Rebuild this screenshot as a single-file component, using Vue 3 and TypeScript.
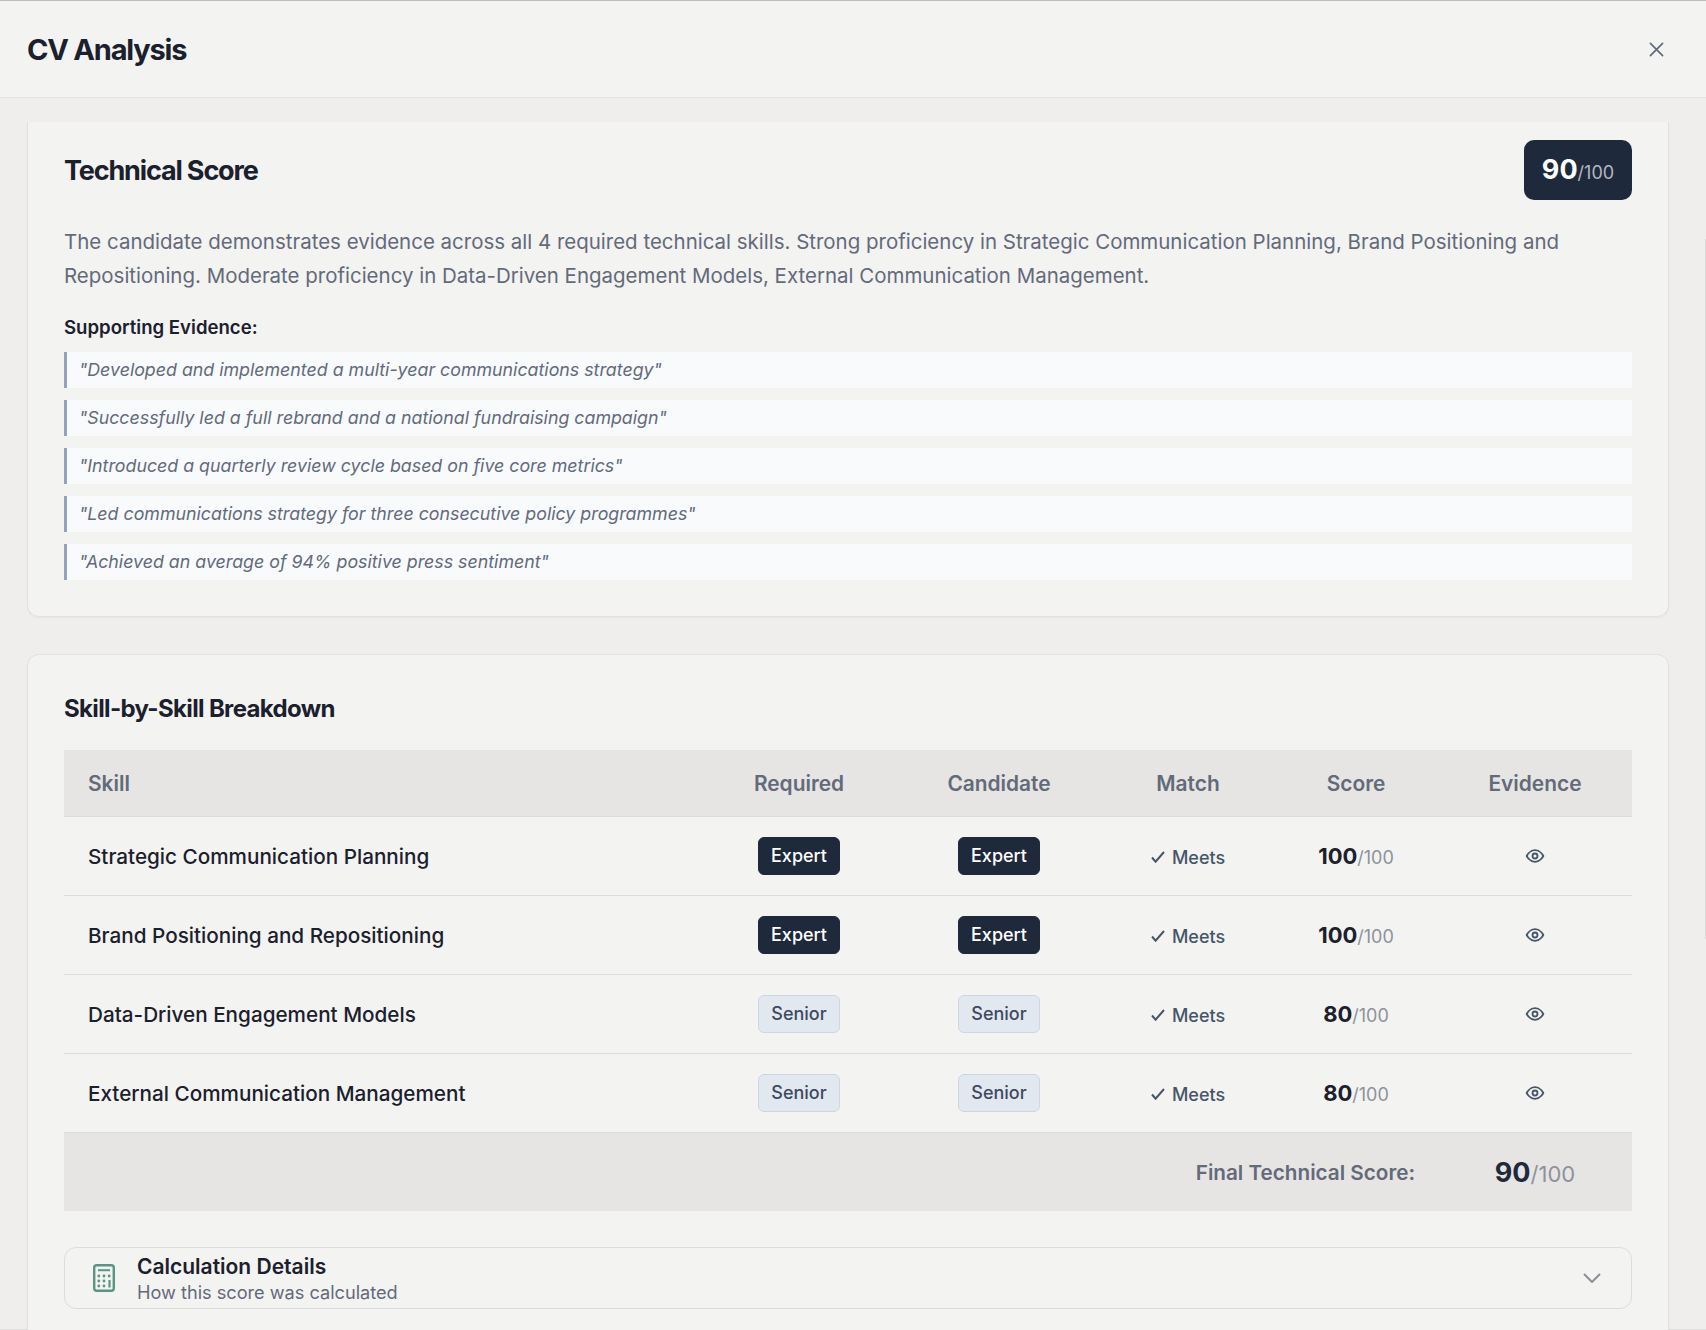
<script setup lang="ts">
interface SkillRow {
  name: string
  required: string
  candidate: string
  score: number
}

const evidence = [
  'Developed and implemented a multi-year communications strategy',
  'Successfully led a full rebrand and a national fundraising campaign',
  'Introduced a quarterly review cycle based on five core metrics',
  'Led communications strategy for three consecutive policy programmes',
  'Achieved an average of 94% positive press sentiment',
]

const skills: SkillRow[] = [
  { name: 'Strategic Communication Planning', required: 'Expert', candidate: 'Expert', score: 100 },
  { name: 'Brand Positioning and Repositioning', required: 'Expert', candidate: 'Expert', score: 100 },
  { name: 'Data-Driven Engagement Models', required: 'Senior', candidate: 'Senior', score: 80 },
  { name: 'External Communication Management', required: 'Senior', candidate: 'Senior', score: 80 },
]
</script>

<template>
  <div class="modal">
    <header class="modal-head">
      <h1>CV Analysis</h1>
      <svg class="close" viewBox="0 0 16 16" fill="none" stroke="currentColor" stroke-width="1.8" stroke-linecap="round">
        <path d="M1.5 1.5l13 13M14.5 1.5l-13 13" />
      </svg>
    </header>

    <div class="modal-body">
      <div class="scroller">
        <section class="card first">
          <div class="score-head">
            <h2>Technical Score</h2>
            <div class="score-badge"><b>90</b><span>/100</span></div>
          </div>
          <p class="summary">
            The candidate demonstrates evidence across all 4 required technical skills. Strong proficiency in Strategic Communication Planning, Brand Positioning and Repositioning. Moderate proficiency in Data-Driven Engagement Models, External Communication Management.
          </p>
          <h4>Supporting Evidence:</h4>
          <ul class="quotes">
            <li v-for="q in evidence" :key="q">"{{ q }}"</li>
          </ul>
        </section>

        <section class="card">
          <h3>Skill-by-Skill Breakdown</h3>
          <table class="skills">
            <colgroup>
              <col style="width: 638px" />
              <col style="width: 194px" />
              <col style="width: 206px" />
              <col style="width: 172px" />
              <col style="width: 164px" />
              <col style="width: 194px" />
            </colgroup>
            <thead>
              <tr>
                <th class="left">Skill</th>
                <th>Required</th>
                <th>Candidate</th>
                <th>Match</th>
                <th>Score</th>
                <th>Evidence</th>
              </tr>
            </thead>
            <tbody>
              <tr v-for="s in skills" :key="s.name">
                <td class="left name">{{ s.name }}</td>
                <td><span class="level" :class="s.required.toLowerCase()">{{ s.required }}</span></td>
                <td><span class="level" :class="s.candidate.toLowerCase()">{{ s.candidate }}</span></td>
                <td>
                  <span class="meets">
                    <svg viewBox="0 0 14 12" fill="none" stroke="currentColor" stroke-width="2">
                      <path d="M1 6.5l3.6 4.2L13 1" />
                    </svg>
                    Meets
                  </span>
                </td>
                <td class="score"><b>{{ s.score }}</b><span>/100</span></td>
                <td>
                  <svg class="eye" viewBox="0 0 24 24" fill="none" stroke="currentColor" stroke-width="2.2" stroke-linecap="round" stroke-linejoin="round">
                    <path d="M2 12s3.6-7 10-7 10 7 10 7-3.6 7-10 7-10-7-10-7z" />
                    <circle cx="12" cy="12" r="3" />
                  </svg>
                </td>
              </tr>
            </tbody>
            <tfoot>
              <tr>
                <td colspan="5" class="final-label">Final Technical Score:</td>
                <td class="final-score"><b>90</b><span>/100</span></td>
              </tr>
            </tfoot>
          </table>

          <div class="calc">
            <svg class="calc-icon" viewBox="0 0 22 28" fill="none" stroke="currentColor" stroke-width="2.4">
              <rect x="1.2" y="1.2" width="19.6" height="25.6" rx="2.5" />
              <path d="M5 6.2h12" stroke-width="2" />
              <path d="M16.5 16v7.5" stroke-width="2.2" />
              <g fill="currentColor" stroke="none">
                <circle cx="5.8" cy="12" r="1.4" /><circle cx="11" cy="12" r="1.4" /><circle cx="16.2" cy="12" r="1.4" />
                <circle cx="5.8" cy="17" r="1.4" /><circle cx="11" cy="17" r="1.4" />
                <circle cx="5.8" cy="22" r="1.4" /><circle cx="11" cy="22" r="1.4" />
              </g>
            </svg>
            <div class="calc-text">
              <div class="calc-title">Calculation Details</div>
              <div class="calc-sub">How this score was calculated</div>
            </div>
            <svg class="chevron" viewBox="0 0 18 10" fill="none" stroke="currentColor" stroke-width="2">
              <path d="M1 1l8 8 8-8" />
            </svg>
          </div>
        </section>
      </div>
      <div class="scroll-thumb"></div>
    </div>
  </div>
</template>

<style>
html, body { margin: 0; background: #efeeec; }
</style>

<style scoped>
.modal {
  width: 1706px;
  height: 1330px;
  display: flex;
  flex-direction: column;
  font-family: Inter, "Liberation Sans", sans-serif;
  color: #1a202c;
  background: #efeeec;
  border-top: 1px solid #bdbdbb;
  box-sizing: border-box;
  overflow: hidden;
}
.modal-head {
  height: 97px;
  box-sizing: border-box;
  flex: none;
  display: flex;
  align-items: center;
  justify-content: space-between;
  padding: 0 42px 0 27px;
  background: #f3f3f1;
  border-bottom: 1px solid #e2e2e0;
}
h1 { margin: 0; font-size: 29px; font-weight: 700; letter-spacing: -1.2px; }
.close { width: 15px; height: 15px; color: #5f6b7c; }
.modal-body {
  position: relative;
  flex: 1;
  min-height: 0;
  padding-top: 24px;
  box-sizing: border-box;
  border-bottom: 1px solid #dcdcda;
}
.scroller {
  height: calc(100% + 1px);
  overflow: hidden;
  padding: 0 37px 0 27px;
}
.scroll-thumb {
  position: absolute;
  right: 0;
  top: 141px;
  width: 1px;
  height: 700px;
  background: #d9d9d7;
}
.card {
  background: #f3f3f1;
  border: 1px solid #e1e1df;
  border-radius: 12px;
  padding: 36px;
  margin-bottom: 37px;
  box-shadow: 0 1px 2px rgba(0, 0, 0, 0.04);
}
.card.first {
  margin-top: -60px;
  padding-top: 77px;
}
.score-head {
  display: flex;
  align-items: center;
  justify-content: space-between;
}
h2 { margin: 0; font-size: 27px; font-weight: 700; letter-spacing: -1.15px; }
.score-badge {
  background: #1e293b;
  color: #fff;
  border-radius: 10px;
  height: 60px;
  width: 108px;
  display: flex;
  align-items: baseline;
  justify-content: center;
  line-height: 60px;
}
.score-badge b { font-size: 27px; font-weight: 700; }
.score-badge span { font-size: 18px; color: #b4b8c0; }
.summary {
  margin: 25px 0 0;
  font-size: 20.48px;
  line-height: 34px;
  color: #636a7a;
}
h4 { margin: 20px 0 0; font-size: 18.6px; line-height: 28px; font-weight: 600; }
.quotes { list-style: none; margin: 11px 0 0; padding: 0; display: flex; flex-direction: column; gap: 12px; }
.quotes li {
  height: 36px;
  line-height: 36px;
  padding-left: 12px;
  border-left: 3px solid #94a3b8;
  background: #f8fafc;
  font-style: italic;
  font-size: 17.8px;
  color: #636a7a;
}
h3 { margin: 0 0 23px; font-size: 24px; line-height: 36px; font-weight: 700; letter-spacing: -0.65px; }
.skills {
  width: 1568px;
  border-collapse: collapse;
  table-layout: fixed;
}
.skills th {
  height: 66px;
  padding: 0;
  background: #e6e5e3;
  border-bottom: 1px solid #dcdcda;
  font-size: 20.9px;
  font-weight: 600;
  color: #636a7a;
  text-align: center;
}
.skills td {
  height: 78px;
  padding: 0;
  text-align: center;
  border-bottom: 1px solid #dcdcda;
}
.skills .left { text-align: left; padding-left: 24px; }
.name { font-size: 20.7px; font-weight: 500; }
.level {
  display: inline-block;
  height: 38px;
  line-height: 36px;
  box-sizing: border-box;
  padding: 0 12px;
  border-radius: 6px;
  font-size: 18px;
  font-weight: 500;
}
.level.expert { background: #1e293b; color: #fff; border: 1px solid #1e293b; }
.level.senior { background: #e2e8f0; color: #3f4a5f; border: 1px solid #cdd6e2; }
.meets {
  display: inline-flex;
  align-items: center;
  gap: 7px;
  font-size: 18px;
  font-weight: 500;
  color: #475569;
  position: relative;
  top: 1px;
}
.meets svg { width: 14px; height: 12px; }
.score b { font-size: 22px; font-weight: 700; }
.score span { font-size: 18px; color: #8d929d; }
.eye { width: 20px; height: 20px; color: #475569; display: block; margin: 0 auto; }
.skills tfoot td {
  height: 78px;
  background: #e6e5e3;
  border-bottom: none;
}
.skills td.final-label {
  text-align: right;
  padding-right: 23px;
  font-size: 20.7px;
  font-weight: 600;
  color: #636a7a;
}
.final-score b { font-size: 27px; font-weight: 700; color: #1e293b; }
.final-score span { font-size: 22px; color: #8d929d; }
.calc {
  margin-top: 36px;
  height: 62px;
  box-sizing: border-box;
  border: 1px solid #dcdcda;
  border-radius: 12px;
  display: flex;
  align-items: center;
  padding: 0 30px 0 28px;
}
.calc-icon { width: 22px; height: 28px; color: #5a9485; flex: none; }
.calc-text { flex: 1; margin-left: 22px; padding-top: 3px; }
.calc-title { font-size: 21px; font-weight: 600; line-height: 26px; }
.calc-sub { font-size: 18.15px; line-height: 25px; color: #636a7a; }
.chevron { width: 18px; height: 10px; color: #8b8f9b; }
</style>
